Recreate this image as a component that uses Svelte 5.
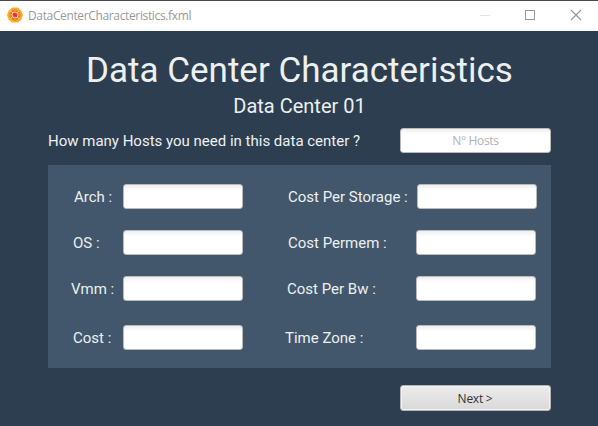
<script>
  const rows = [
    { y: 19, left: { name: 'Arch', indent: 26 }, right: { name: 'Cost Per Storage', indent: 45, label: 129 } },
    { y: 21, left: { name: 'OS', indent: 25 }, right: { name: 'Cost Permem', indent: 45, label: 128 } },
    { y: 21, left: { name: 'Vmm', indent: 23 }, right: { name: 'Cost Per Bw', indent: 44, label: 129 } },
    { y: 24, left: { name: 'Cost', indent: 25 }, right: { name: 'Time Zone', indent: 42, label: 131 } }
  ];
</script>

<div class="window">
  <header class="titlebar">
    <svg class="logo" width="16" height="16" viewBox="0 0 16 16">
      <path d="M5.3.4h5.400l3.700 3.300L16 8l-1.600 4.400-3.700 3.200H5.300l-3.700-3.200L0 8l1.600-4.300z" fill="#fdae26" />
      <circle cx="8" cy="8" r="5.800" fill="#f98520" />
      <circle cx="8" cy="8" r="4" fill="#f0521f" />
      <path d="M3.500 4 5.600 5.500M12.300 3.800 10.500 5.600M3.800 11.500 5.300 10M12.300 12 10.600 10.300" stroke="#ffe3c2" stroke-width="1" />
      <path d="M5.500 5.500Q8 4.500 10.500 5.500 11.700 8 10.500 10.400 8 11.700 5.600 10.100 4.200 8 5.500 5.500z" fill="none" stroke="#ffe9d2" stroke-width="1" />
      <path d="M6.800 7 9.200 9" stroke="#e5301c" stroke-width="1.800" />
    </svg>
    <span class="caption">DataCenterCharacteristics.fxml</span>
    <svg class="controls" width="108" height="12" viewBox="0 0 108 12" fill="none" shape-rendering="crispEdges">
      <path d="M0 6.500h10" stroke="#e4e4e4" />
      <rect x="45.500" y="1.500" width="9" height="9" stroke="#999" />
      <path d="M91 1l10 10M101 1 91 11" stroke="#949494" stroke-width="1.100" shape-rendering="auto" />
    </svg>
  </header>

  <main>
    <h1>Data Center Characteristics</h1>
    <h2>Data Center 01</h2>
    <div class="hosts">
      <label for="hosts">How many Hosts you need in this data center ?</label>
      <input id="hosts" type="text" placeholder="N° Hosts" />
    </div>
    <section class="panel">
      {#each rows as row}
        <div class="row" style:margin-top="{row.y}px">
          <label style:margin-left="{row.left.indent}px" style:width="{75 - row.left.indent}px" for={row.left.name}>{row.left.name} :</label>
          <input id={row.left.name} type="text" />
          <label style:margin-left="{row.right.indent}px" style:width="{row.right.label}px" for={row.right.name}>{row.right.name} :</label>
          <input id={row.right.name} type="text" />
        </div>
      {/each}
    </section>
    <button type="button">Next &gt;</button>
  </main>
</div>

<style>
  :global(body) { margin: 0; }
  .window {
    box-sizing: border-box;
    width: 598px;
    height: 426px;
    overflow: hidden;
    background: #2d3e50;
    color: #ecf0f1;
    font-family: Roboto, sans-serif;
  }
  .titlebar {
    box-sizing: border-box;
    height: 31px;
    display: flex;
    align-items: center;
    padding: 0 10px 0 7px;
    border-top: 1px solid #4a4a4a;
    background: #fff;
  }
  .logo { flex: none; margin-top: -2px; }
  .caption {
    margin-left: 5px;
    font: 12px/16px "Open Sans", "Noto Sans", sans-serif;
    letter-spacing: -0.36px;
    color: #999;
    white-space: nowrap;
  }
  .controls { margin-left: auto; margin-top: -2px; }
  main {
    display: flex;
    flex-direction: column;
    padding: 19px 47px 0 48px;
  }
  h1, h2 { margin: 0; font-weight: 400; text-align: center; white-space: nowrap; }
  h1 { font-size: 35px; line-height: 42px; }
  h2 { font-size: 20px; line-height: 24px; margin-top: 2px; }
  .hosts { display: flex; justify-content: space-between; margin-top: 10px; }
  label { flex: none; height: 25px; font-size: 15px; line-height: 27px; white-space: nowrap; }
  input {
    box-sizing: border-box;
    flex: none;
    width: 120px;
    height: 25px;
    padding: 0 6px;
    border: 1px solid #bababa;
    border-radius: 3px;
    outline: 0;
    background: linear-gradient(#eee, #fff 5px);
    font: 12px "Open Sans", "Noto Sans", sans-serif;
  }
  #hosts { width: 151px; text-align: center; letter-spacing: -0.35px; }
  #hosts::placeholder { color: #b2b2b2; opacity: 1; }
  .panel {
    height: 203px;
    margin-top: 12px;
    display: flex;
    flex-direction: column;
    background: #42576c;
  }
  .row { display: flex; height: 25px; flex: none; }
  button {
    box-sizing: border-box;
    align-self: flex-end;
    width: 151px;
    height: 26px;
    margin: 17px 0 0;
    padding: 0 1px 0 0;
    border: 1px solid #b5b5b5;
    border-radius: 3px;
    background: linear-gradient(#ececec, #d9d9d9);
    box-shadow: inset 0 0 0 1px #f3f3f3;
    color: #333;
    font: 12px "Open Sans", "Noto Sans", sans-serif;
    letter-spacing: -0.25px;
  }
</style>
